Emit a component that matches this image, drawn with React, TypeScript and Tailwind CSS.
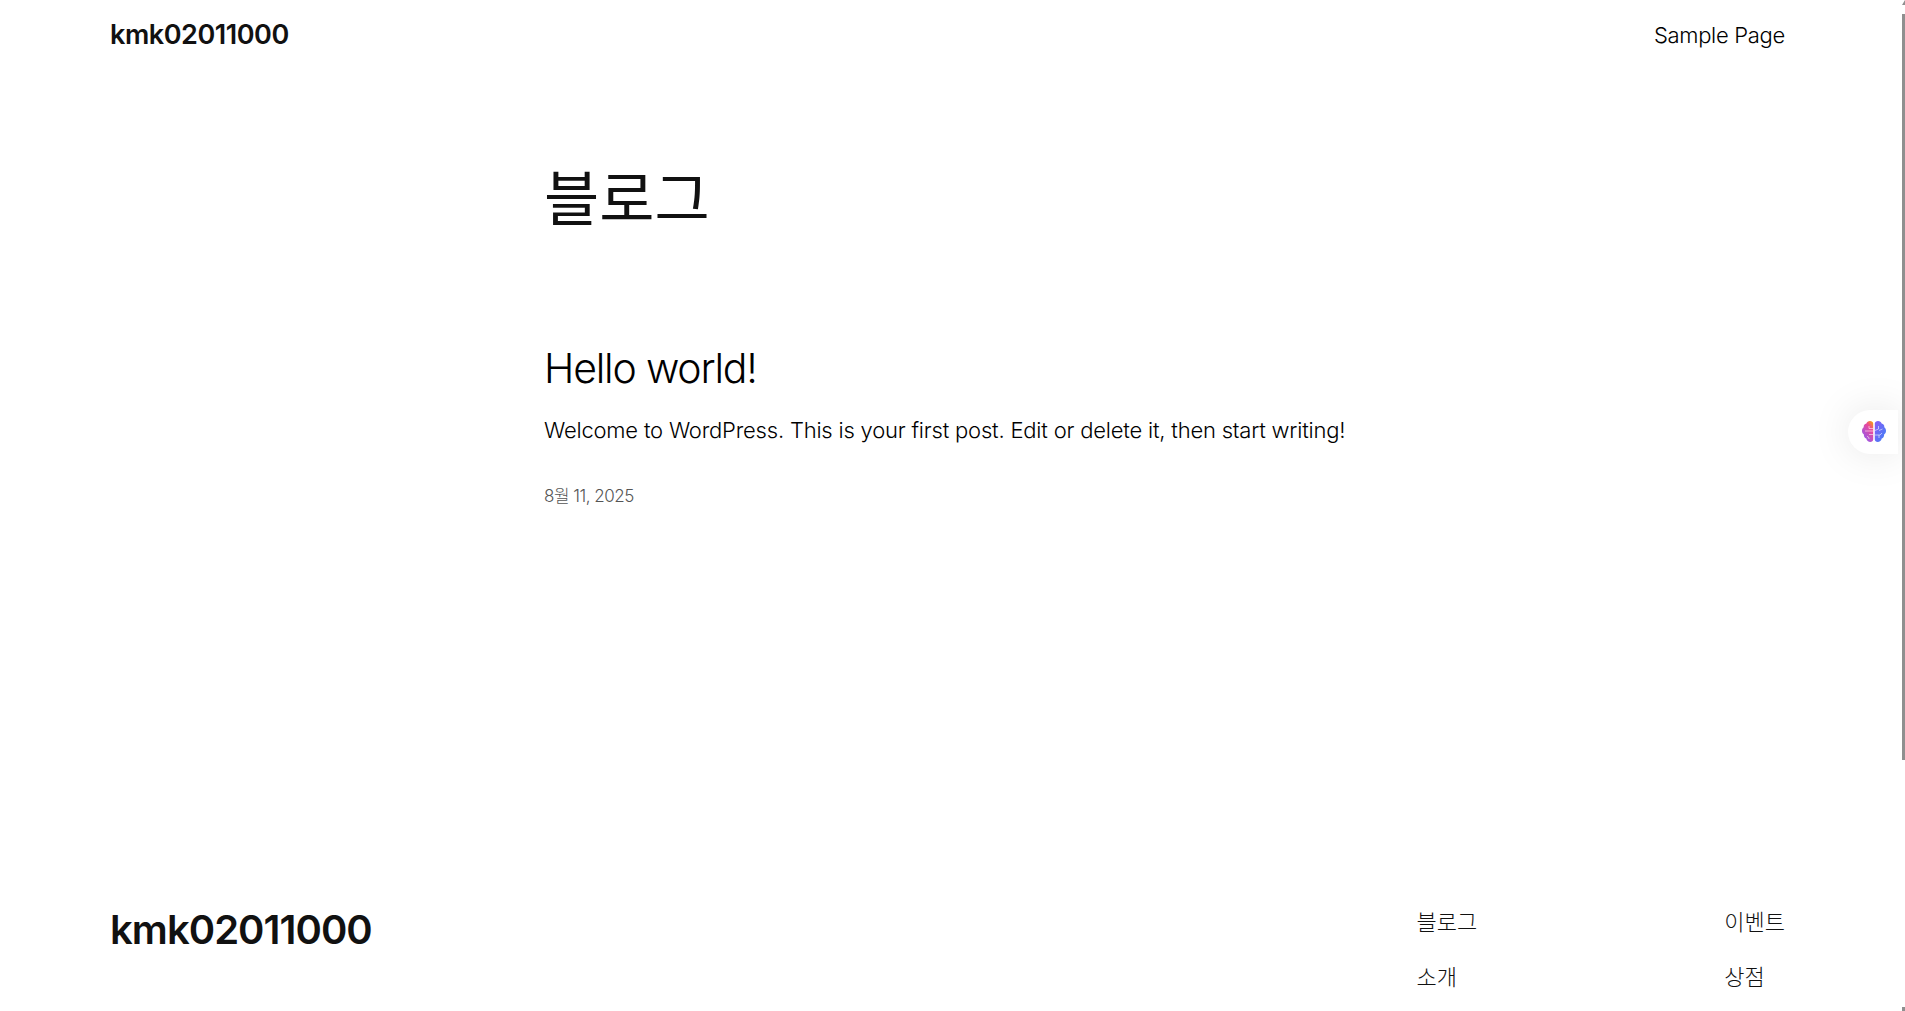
import React from 'react';

const FONT = "font-['Inter','Noto_Sans_CJK_KR',sans-serif]";

const BrainIcon: React.FC = () => (
  <svg viewBox="0 0 24 22" className="w-6 h-[22px]" role="img" aria-label="Brain">
    <defs>
      <linearGradient id="brainLeft" x1="0.9" y1="0" x2="0.2" y2="1">
        <stop offset="0" stopColor="#f59e0b" />
        <stop offset="0.3" stopColor="#ec4899" />
        <stop offset="1" stopColor="#8b5cf6" />
      </linearGradient>
      <linearGradient id="brainRight" x1="0" y1="0" x2="1" y2="1">
        <stop offset="0" stopColor="#8b5cf6" />
        <stop offset="1" stopColor="#3b82f6" />
      </linearGradient>
    </defs>
    <path
      fill="url(#brainLeft)"
      d="M11.2 2.5C11.2 1 9.6 0 8 0 6.2 0 4.8 1 4.4 2.6 2.6 3 1.5 4.4 1.7 6.2.6 7 0 8.3 0 9.8c0 1.6.7 2.9 1.9 3.7-.2 1.8.7 3.5 2.4 4.1.4 2 2 3.4 4.1 3.4 1.5 0 2.8-1.1 2.8-2.5z"
    />
    <path
      fill="url(#brainRight)"
      d="M12.8 2.5C12.8 1 14.4 0 16 0c1.8 0 3.2 1 3.6 2.6 1.8.4 2.9 1.8 2.7 3.6 1.1.8 1.7 2.1 1.7 3.6 0 1.6-.7 2.9-1.9 3.7.2 1.8-.7 3.5-2.4 4.1-.4 2-2 3.4-4.1 3.4-1.5 0-2.8-1.1-2.8-2.5z"
    />
    <path
      d="M3 10h8M7 5v2.5h4M5 15.5c1.5 0 2 1 2 2.5M7 13.5h4M16.5 5v3l-3.5 1.5M20.5 8l-3.5 1.5M13 14h5l2-2M17 14v3"
      fill="none"
      stroke="#ffffff"
      strokeWidth="0.7"
      opacity="0.8"
    />
  </svg>
);

const FooterLink: React.FC<{ label: string }> = ({ label }) => (
  <a className="block text-[22px] leading-[28px] font-light text-[#111111]">{label}</a>
);

export default function App() {
  return (
    <div className={`relative h-screen overflow-hidden bg-white text-[#111111] ${FONT}`}>
      <header className="flex items-center justify-between pl-[110px] pr-[120px] pt-[18px]">
        <a className="text-[27px] leading-[34px] font-semibold tracking-[-0.45px]">kmk02011000</a>
        <a className="text-[22px] leading-[34px] font-light tracking-[-0.3px] text-black">Sample Page</a>
      </header>

      <main className="pl-[544px] pt-[107px]">
        <h1 className="text-[60px] leading-[80px] font-normal">블로그</h1>
        <h2 className="mt-[104px] text-[41px] leading-[50px] font-light tracking-[-1.2px] text-black">Hello world!</h2>
        <p className="mt-[20px] text-[22px] leading-[34px] font-light tracking-[-0.2px] text-black">
          Welcome to WordPress. This is your first post. Edit or delete it, then start writing!
        </p>
        <p className="mt-[37px] text-[17px] leading-[24px] font-light text-[#555555] tracking-[-0.5px]">8월 11, 2025</p>
      </main>

      <footer className="flex justify-between pl-[110px] pr-[120px] pt-[396px]">
        <a className="text-[40px] leading-[52px] font-semibold tracking-[-0.95px]">kmk02011000</a>
        <div className="flex gap-[247px] pt-[4px]">
          <div className="flex flex-col gap-[27px]">
            <FooterLink label="블로그" />
            <FooterLink label="소개" />
          </div>
          <div className="flex flex-col gap-[27px]">
            <FooterLink label="이벤트" />
            <FooterLink label="상점" />
          </div>
        </div>
      </footer>

      {/* floating widget tab */}
      <div className="absolute left-[1848px] top-[410px] w-[50px] h-[44px] rounded-l-[22px] bg-white shadow-[0_0_40px_rgba(0,0,0,0.1)] flex items-center pl-[14px]">
        <BrainIcon />
      </div>

      {/* browser scrollbar */}
      <div className="absolute right-0 top-0 bottom-0 w-[3px] flex flex-col items-stretch bg-white">
        <svg viewBox="0 0 3 5" className="w-[3px] h-[5px] shrink-0">
          <path d="M3 0v5H0z" fill="#8f8f8f" />
        </svg>
        <div className="mt-[9px] h-[746px] bg-[#8f8f8f]" />
        <div className="mt-auto h-[4px] bg-[#8f8f8f]" />
      </div>
    </div>
  );
}
